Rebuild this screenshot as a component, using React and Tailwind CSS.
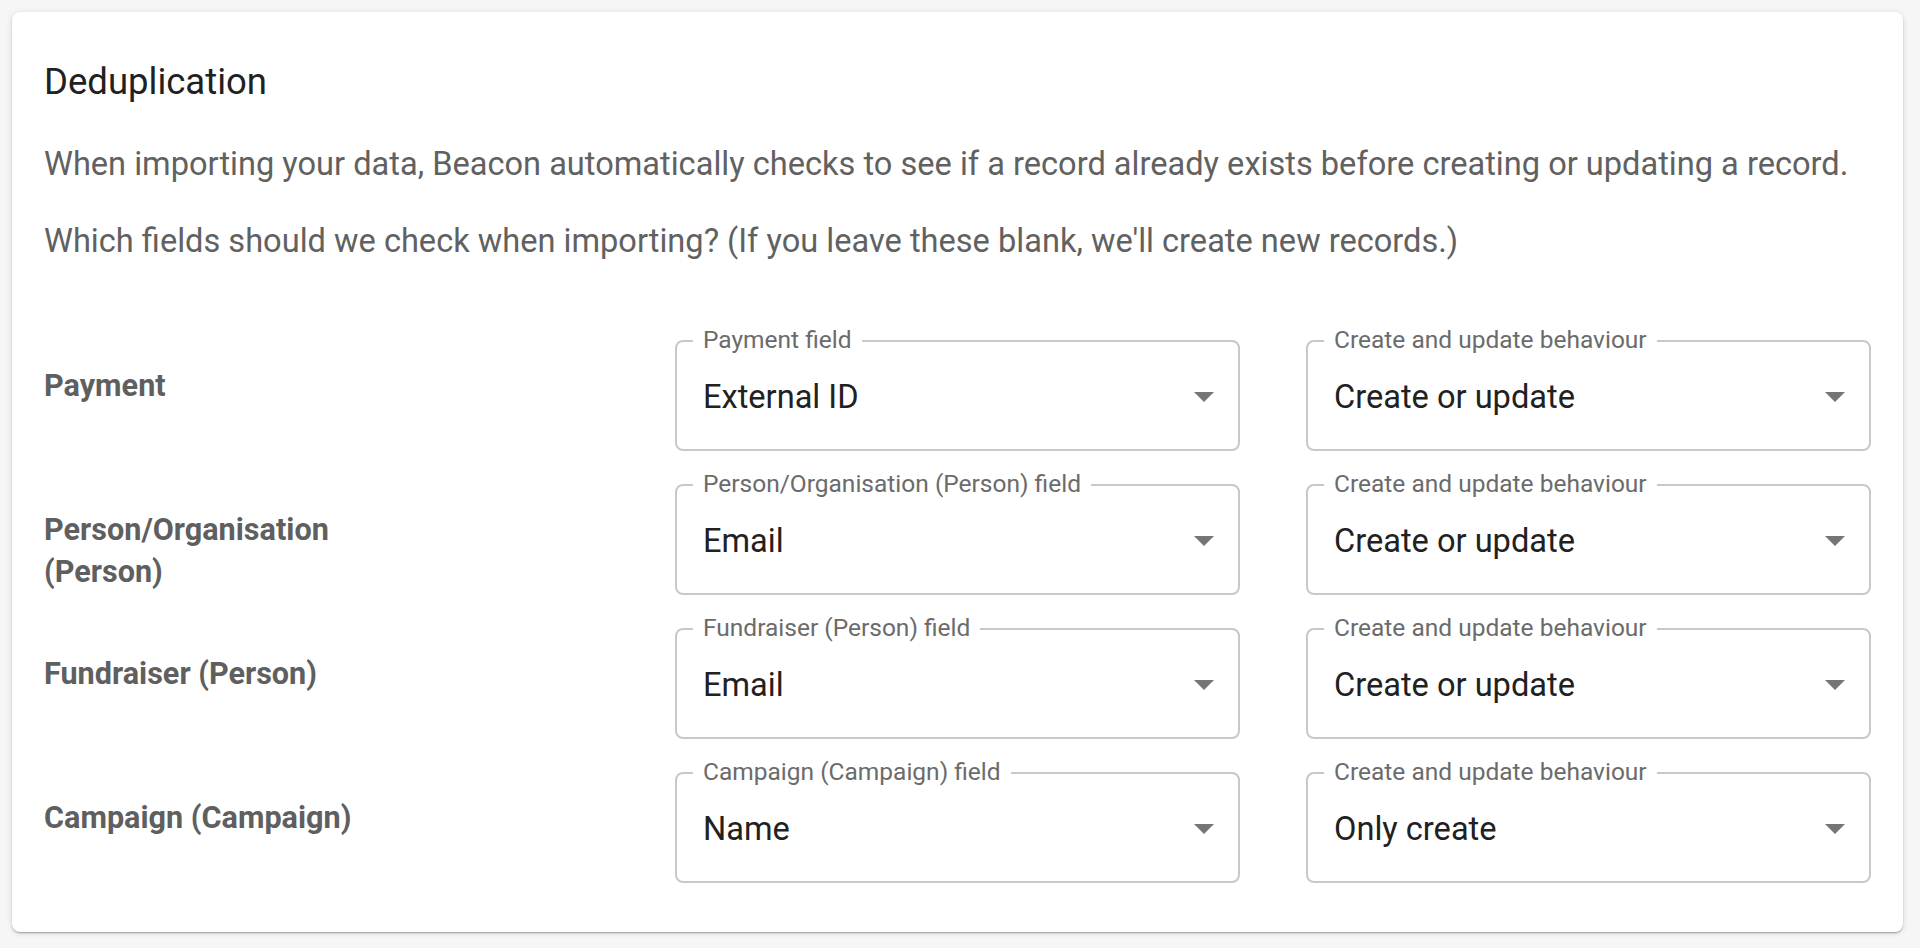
const rows = [
  { label: 'Payment', field: 'Payment field', value: 'External ID', behaviour: 'Create or update' },
  { label: 'Person/Organisation (Person)', field: 'Person/Organisation (Person) field', value: 'Email', behaviour: 'Create or update' },
  { label: 'Fundraiser (Person)', field: 'Fundraiser (Person) field', value: 'Email', behaviour: 'Create or update' },
  { label: 'Campaign (Campaign)', field: 'Campaign (Campaign) field', value: 'Name', behaviour: 'Only create' },
];

const ArrowDrop = () => (
  <svg width="48" height="48" viewBox="0 0 24 24" className="shrink-0 fill-[#757575]">
    <path d="M7 10l5 5 5-5z" />
  </svg>
);

const OutlinedSelect = ({ label, value }) => (
  <div className="relative h-[111px] rounded-[8px] border-2 border-[#c8c8c8] flex items-center pl-[26px] pr-[10px]">
    <span className="absolute left-[16px] top-[-14px] bg-white px-[10px] text-[24.5px] leading-[24px] text-[#6b6b6b] whitespace-nowrap">
      {label}
    </span>
    <span className="flex-1 pt-[2px] text-[32.6px] leading-[40px] text-[#212121] truncate">{value}</span>
    <ArrowDrop />
  </div>
);

export default function App() {
  return (
    <div className="min-h-[948px] bg-[#f6f6f6] pt-[12px] pb-[12px] pl-[12px] pr-[17px] font-['Roboto',sans-serif]">
      <div className="bg-white rounded-[8px] shadow-[0_2px_2px_-1px_rgba(0,0,0,0.2),0_1px_2px_0_rgba(0,0,0,0.14),0_1px_6px_0_rgba(0,0,0,0.12)] px-[32px] pt-[46px] pb-[49px]">
        <h2 className="text-[36.5px] leading-[48px] text-[#212121]">Deduplication</h2>
        <p className="mt-[36px] text-[32.6px] leading-[44px] text-[#616161]">
          When importing your data, Beacon automatically checks to see if a record already exists before creating or updating a record.
        </p>
        <p className="mt-[33px] text-[32.6px] leading-[44px] text-[#616161]">
          Which fields should we check when importing? (If you leave these blank, we'll create new records.)
        </p>

        <div className="mt-[77px] flex flex-col gap-[33px]">
          {rows.map((row) => (
            <div key={row.label} className="grid grid-cols-3 gap-x-[66px]">
              <div className="pt-[25px] max-w-[400px] text-[30.6px] leading-[42px] font-bold text-[#5f5f5f]">
                {row.label}
              </div>
              <OutlinedSelect label={row.field} value={row.value} />
              <OutlinedSelect label="Create and update behaviour" value={row.behaviour} />
            </div>
          ))}
        </div>
      </div>
    </div>
  );
}
